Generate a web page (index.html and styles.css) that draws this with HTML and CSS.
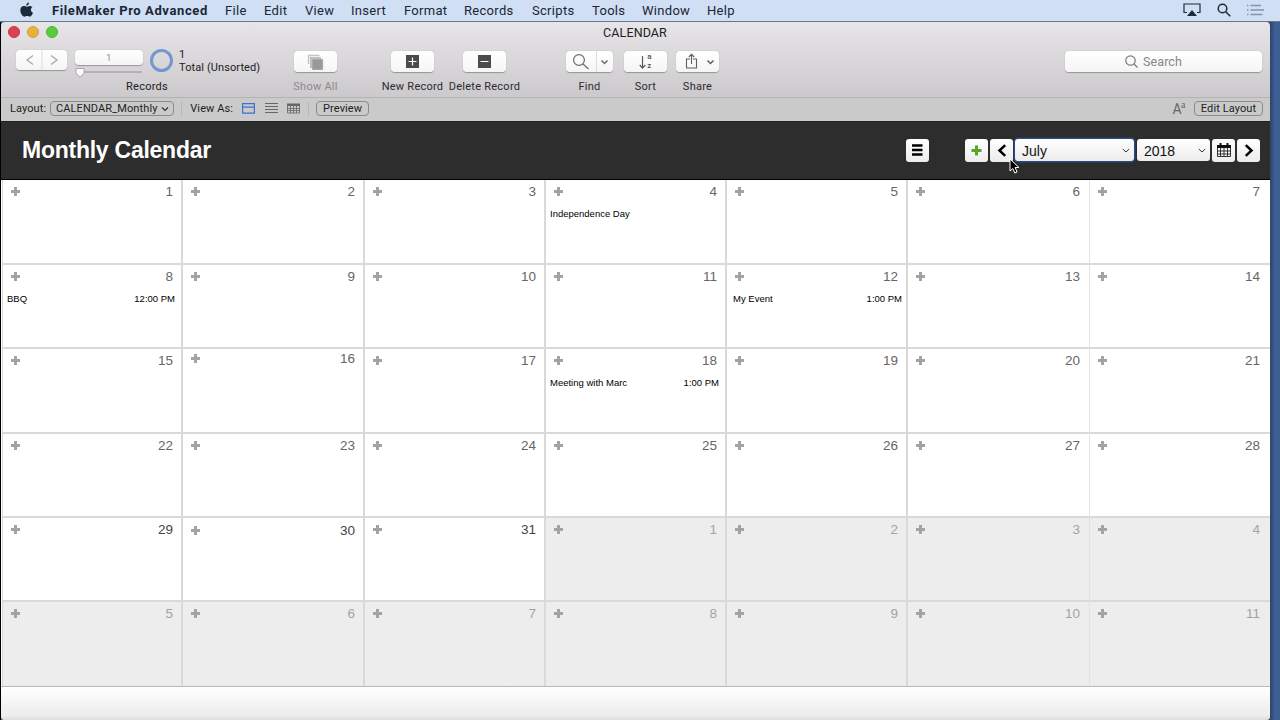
FILE: index.html
```html
<!DOCTYPE html>
<html lang="en">
<head>
    <meta charset="UTF-8">
    <title>CALENDAR</title>
    <link rel="stylesheet" href="styles.css">
</head>
<body>
    <nav class="menubar">
        <svg class="apple" width="13" height="16" viewBox="0 0 13 16"><path d="M9 .6c.1 1.700-1.200 3.100-2.700 3.200C6.100 2.300 7.500.8 9 .6zM6.700 4.700c.7 0 1.600-.8 3-.8 1.200 0 2.100.6 2.700 1.400-2.200 1.400-1.900 4.500.6 5.400-.5 1.500-1.800 4-3.300 4-.9 0-1.400-.6-2.600-.6s-1.700.6-2.600.6C2.500 14.700.3 11.200.3 8.300c0-2.800 1.700-4.300 3.500-4.300 1.200 0 2.200.7 2.900.7z"/></svg>
        <b>FileMaker Pro Advanced</b>
        <span>File</span>
        <span>Edit</span>
        <span>View</span>
        <span>Insert</span>
        <span>Format</span>
        <span>Records</span>
        <span>Scripts</span>
        <span>Tools</span>
        <span>Window</span>
        <span>Help</span>
        <div class="status-icons">
            <svg width="18" height="14" viewBox="0 0 18 14"><path d="M4 9.500H1V1h16v8.500h-3" fill="none" stroke="#1d2a3c" stroke-width="1.200"/><path d="M9 7l5 6H4z" fill="#1d2a3c"/></svg>
            <svg width="14" height="14" viewBox="0 0 14 14"><g fill="none" stroke="#1d2a3c" stroke-width="1.500"><circle cx="5.500" cy="5.500" r="4.300"/><path d="M8.700 8.700l4.600 4.600"/></g></svg>
            <svg width="17" height="12" viewBox="0 0 17 12"><path d="M0 1.500h1.500M3.500 1.500H14M0 6h1.500M3.500 6H17M0 10.500h1.500M3.500 10.500H15.500" stroke="#8593a9" stroke-width="1.300"/></svg>
        </div>
    </nav>

    <main class="window">
        <header class="titlebar">
            <div class="lights"><i class="red"></i><i class="yellow"></i><i class="green"></i></div>
            <h1>CALENDAR</h1>
        </header>

        <section class="toolbar">
            <div class="records">
                <div class="records-row">
                    <div class="btn nav-btns">
                        <svg width="50" height="20" viewBox="0 0 50 20"><g fill="none" stroke="#aaa" stroke-width="1.400"><path d="M16 5.500L10 10l6 4.500M34 5.500l6 4.500-6 4.500"/></g><path d="M25 0v20" stroke="#ddd"/></svg>
                    </div>
                    <div class="slider">
                        <div class="btn record-no">1</div>
                        <svg width="68" height="10" viewBox="0 0 68 10"><path d="M3 4h64" stroke="#b3b1b3" stroke-width="2"/><path d="M1 .5h8v4.500L5 9.300 1 5z" fill="#fff" stroke="#999" stroke-width=".8"/></svg>
                    </div>
                    <div class="ring"></div>
                    <div class="total">1<br>Total (Unsorted)</div>
                </div>
                <label>Records</label>
            </div>
            <div class="tool show-all">
                <div class="btn"><svg width="18" height="16" viewBox="0 0 18 16"><path d="M1.500 10V1.500h11" fill="none" stroke="#c4c4c4" stroke-width="1.500"/><path d="M3 3h11v11H3z" fill="#bbb"/><path d="M5 5h11v11H5z" fill="#999" stroke="#d6d6d6" stroke-width=".5"/></svg></div>
                <label>Show All</label>
            </div>
            <div class="tool new-record">
                <div class="btn"><svg width="13" height="13" viewBox="0 0 13 13"><path d="M0 0h13v13H0z" fill="#4b4b4b"/><path d="M2.500 6.500h8M6.500 2.500v8" stroke="#fff" stroke-width="1.200"/></svg></div>
                <label>New Record</label>
            </div>
            <div class="tool delete-record">
                <div class="btn"><svg width="13" height="13" viewBox="0 0 13 13"><path d="M0 0h13v13H0z" fill="#4b4b4b"/><path d="M2.500 6.500h8" stroke="#fff" stroke-width="1.200"/></svg></div>
                <label>Delete Record</label>
            </div>
            <div class="tool find">
                <div class="btn"><svg width="47" height="21" viewBox="0 0 47 21"><g fill="none" stroke="#6a6a6a" stroke-width="1.200"><circle cx="13" cy="9" r="5.400"/><path d="M17 13l5.500 5"/><path d="M35.500 9.500l3 3 3-3" stroke-width="1.500"/></g><path d="M30.500 0v21" stroke="#ddd"/></svg></div>
                <label>Find</label>
            </div>
            <div class="tool sort">
                <div class="btn">
                    <svg width="7" height="14" viewBox="0 0 7 14"><path d="M3.500 1v12M.7 10l2.800 3 2.800-3" fill="none" stroke="#5a5a5a" stroke-width="1.200"/></svg>
                    <div class="az"><span>a</span><span>z</span></div>
                </div>
                <label>Sort</label>
            </div>
            <div class="tool share">
                <div class="btn"><svg width="43" height="21" viewBox="0 0 43 21"><g fill="none" stroke="#5f5f5f" stroke-width="1.100"><path d="M14 8h-3.500v9h10V8H17M15.500 13V3.500M12.800 6l2.700-2.700L18.200 6"/><path d="M31.500 9.500l3 3 3-3" stroke-width="1.500"/></g></svg></div>
                <label>Share</label>
            </div>
            <div class="btn search">
                <svg width="13" height="13" viewBox="0 0 13 13"><g fill="none" stroke="#7a7a7a" stroke-width="1.200"><circle cx="5.500" cy="5.500" r="4.700"/><path d="M9 9l3.500 3.500"/></g></svg>
                Search
            </div>
        </section>

        <section class="layoutbar">
            <span>Layout:</span>
            <div class="pill layout-name">CALENDAR_Monthly <svg width="8" height="6" viewBox="0 0 8 6"><path d="M1 1.500l3 3 3-3" fill="none" stroke="#333" stroke-width="1.200"/></svg></div>
            <i class="sep"></i>
            <span class="view-as">View As:</span>
            <div class="views">
                <svg width="13" height="11" viewBox="0 0 13 11"><path d="M.6.6h11.800v9.500H.6zM.6 4.200h11.800" fill="none" stroke="#3a73cf" stroke-width="1.200"/></svg>
                <svg width="13" height="11" viewBox="0 0 13 11"><path d="M0 .5h13M0 3.500h13M0 6.500h13M0 9.500h13" stroke="#666"/></svg>
                <svg width="13" height="11" viewBox="0 0 13 11"><path d="M0 .5h13v2.500H0z" fill="#666"/><path d="M.5 1v9h12V1M0 5.500h13M0 7.500h13M3.500 3v7M6.500 3v7M9.500 3v7" fill="none" stroke="#666" stroke-width=".8"/></svg>
            </div>
            <i class="sep"></i>
            <div class="pill preview">Preview</div>
            <span class="aa">A<sup>a</sup></span>
            <div class="pill edit">Edit Layout</div>
        </section>

        <section class="cal-header">
            <h2>Monthly Calendar</h2>
            <div class="key menu-key"><svg width="11" height="12" viewBox="0 0 11 12"><path d="M0 1.500h10.500M0 6h10.500M0 10.500h10.500" stroke="#000" stroke-width="2.500"/></svg></div>
            <div class="key"><svg width="11" height="11" viewBox="0 0 11 11"><path d="M.5 5.500h10M5.500.5v10" stroke="#57a52b" stroke-width="3"/></svg></div>
            <div class="key"><svg width="10" height="13" viewBox="0 0 10 13"><path d="M8.200 1.200L2.500 6.500l5.700 5.300" fill="none" stroke="#000" stroke-width="2.500"/></svg></div>
            <div class="select month">July <svg width="8" height="6" viewBox="0 0 8 6"><path d="M.8 1l3.200 3L7.200 1" fill="none" stroke="#333"/></svg></div>
            <div class="select year">2018 <svg width="8" height="6" viewBox="0 0 8 6"><path d="M.8 1l3.200 3L7.200 1" fill="none" stroke="#333"/></svg></div>
            <div class="key"><svg width="14" height="14" viewBox="0 0 14 14"><path d="M0 2h14v3H0z" fill="#111"/><path d="M3.500 0v3M10.500 0v3" stroke="#111" stroke-width="2"/><path d="M.5 5v8.500h13V5M3.500 5v9M7 5v9M10.500 5v9M0 8h14M0 11h14" fill="none" stroke="#222" stroke-width=".9"/></svg></div>
            <div class="key"><svg width="10" height="13" viewBox="0 0 10 13"><path d="M1.800 1.200l5.700 5.300-5.700 5.300" fill="none" stroke="#000" stroke-width="2.500"/></svg></div>
            <svg class="cursor" width="12" height="18" viewBox="0 0 12 18"><path d="M1 1v12l2.800-2.500 2 4.500 2.300-1-2-4.500h3.800z" fill="#000" stroke="#fff"/></svg>
        </section>

        <section class="grid" id="grid"></section>
        <footer></footer>
    </main>

    <script>
        const events = {
            4: ['Independence Day', ''],
            8: ['BBQ', '12:00 PM'],
            12: ['My Event', '1:00 PM'],
            18: ['Meeting with Marc', '1:00 PM']
        };
        const grid = document.getElementById('grid');

        for (let i = 1; i <= 42; i++) {
            const other = i > 31;
            const cell = document.createElement('div');
            cell.className = 'day' + (other ? ' other' : '') + (i === 16 ? ' raised' : '') + (i === 30 ? ' lowered' : '');
            let html = '<div class="day-top"><i class="plus"></i><span>' + (other ? i - 31 : i) + '</span></div>';
            if (events[i]) {
                html += '<div class="event"><span>' + events[i][0] + '</span><span>' + events[i][1] + '</span></div>';
            }
            cell.innerHTML = html;
            grid.appendChild(cell);
        }
    </script>
</body>
</html>
```
FILE: styles.css
```css
* {
    box-sizing: border-box;
}
body {
    margin: 0;
    width: 1280px;
    height: 720px;
    overflow: hidden;
    background: linear-gradient(90deg, #000 1px, #3d5e93 1px, #3d5e93 1268px, #2c4568 1270px, #3e5f94 1275px);
    font-family: Roboto, "Liberation Sans", sans-serif;
    color: #222;
}
svg {
    display: block;
    flex: none;
}
i {
    display: block;
}

/* menu bar */
.menubar {
    display: grid;
    grid-template-columns: 32px 173px 39px 41px 46px 53px 60px 68px 60px 50px 65px 1fr 97px;
    align-items: center;
    height: 22px;
    padding: 0 0 1px 20px;
    background: #d0dff3;
    border-bottom: 1px solid #66788f;
    font-size: 13px;
    letter-spacing: 0.3px;
    color: #1a2636;
    white-space: nowrap;
}
.menubar b {
    font-weight: 700;
    letter-spacing: 0.6px;
}
.apple {
    fill: #1d2a3c;
}
.status-icons {
    display: flex;
    align-items: center;
    gap: 16px;
}

/* window */
.window {
    display: flex;
    flex-direction: column;
    width: 1269px;
    height: 698px;
    margin-left: 1px;
    border-radius: 4px;
    overflow: hidden;
    background: linear-gradient(#e7e5e7, #cbc9cb 76px);
}
.titlebar {
    display: grid;
    grid-template-columns: 100px 1fr 100px;
    align-items: center;
    height: 20px;
    padding-left: 7px;
}
.titlebar h1 {
    margin: 0;
    padding-right: 8px;
    text-align: center;
    font-size: 12.5px;
    font-weight: 400;
    letter-spacing: 0.1px;
}
.lights {
    display: flex;
    gap: 7px;
}
.lights i {
    width: 12px;
    height: 12px;
    border-radius: 50%;
    border: 1px solid #c43742;
    background: #dc4350;
}
.lights .yellow {
    border-color: #d39e35;
    background: #e7b140;
}
.lights .green {
    border-color: #45b52f;
    background: #5bcb42;
}

/* toolbar */
.toolbar {
    display: flex;
    align-items: flex-start;
    height: 55px;
    padding: 9px 8px 0 15px;
    font-size: 11px;
    letter-spacing: 0.25px;
}
.btn {
    display: flex;
    align-items: center;
    justify-content: center;
    background: linear-gradient(#fff, #f5f5f5);
    border-radius: 4px;
    box-shadow: 0 0.5px 1px rgba(0, 0, 0, 0.3);
}
.toolbar label {
    height: 14px;
    line-height: 14px;
    white-space: nowrap;
}
.records {
    width: 262px;
}
.records-row {
    display: flex;
    height: 30px;
    margin-top: -1px;
}
.nav-btns {
    width: 51px;
    height: 20px;
}
.slider {
    width: 68px;
    margin-left: 8px;
}
.record-no {
    height: 15px;
    margin-bottom: 3px;
    font-size: 9px;
    color: #888;
}
.ring {
    width: 23px;
    height: 23px;
    margin: -1px 0 0 7px;
    border: 3px solid #7398cf;
    border-radius: 50%;
}
.total {
    margin: -2px 0 0 6px;
    line-height: 13px;
    letter-spacing: 0.1px;
    white-space: nowrap;
}
.records label {
    display: block;
    width: 262px;
    text-align: center;
}
.tool {
    display: flex;
    flex-direction: column;
    align-items: center;
    width: 43px;
    color: #2c2c2c;
}
.tool .btn {
    width: 43px;
    height: 21px;
    margin-bottom: 8px;
}
.show-all {
    margin-left: 16px;
    color: #8b898b;
}
.new-record {
    margin-left: 54px;
}
.delete-record {
    margin-left: 29px;
}
.find {
    width: 47px;
    margin-left: 60px;
}
.find .btn {
    width: 47px;
}
.sort {
    margin-left: 11px;
}
.sort .btn {
    gap: 1px;
}
.share {
    margin-left: 9px;
}
.az {
    display: flex;
    flex-direction: column;
    margin-top: -2px;
    font-size: 8px;
    font-weight: 500;
    line-height: 9px;
    color: #555;
}
.search {
    gap: 5px;
    width: 197px;
    height: 21px;
    margin-left: auto;
    padding-right: 20px;
    font-size: 12.5px;
    letter-spacing: 0.1px;
    color: #868686;
}

/* layout bar */
.layoutbar {
    display: flex;
    align-items: center;
    height: 24px;
    padding: 0 7px 2px 9px;
    background: #cacaca;
    border-top: 1px solid #b3b3b3;
    font-size: 11px;
    letter-spacing: 0.1px;
    white-space: nowrap;
}
.pill {
    display: flex;
    align-items: center;
    justify-content: center;
    height: 15px;
    border: 1px solid #8b8b8b;
    border-radius: 4px;
}
.layout-name {
    gap: 3px;
    width: 124px;
    margin: 0 7px 0 4px;
}
.sep {
    width: 1px;
    height: 14px;
    background: #b7b7b7;
}
.view-as {
    margin: 0 9px 0 8px;
}
.views {
    display: flex;
    gap: 9.5px;
    margin-right: 9px;
}
.preview {
    width: 53px;
    margin-left: 7px;
}
.layoutbar .sep ~ .sep {
    margin-left: -1px;
}
.aa {
    margin-left: auto;
    font-size: 14px;
    letter-spacing: -0.5px;
    color: #666;
}
.aa sup {
    font-family: "Liberation Serif", serif;
    font-size: 10px;
    line-height: 0;
}
.edit {
    width: 69px;
    margin-left: 9px;
}

/* calendar header */
.cal-header {
    position: relative;
    display: flex;
    align-items: center;
    gap: 2px;
    height: 59px;
    padding: 0 10px 1px 21px;
    background: #2d2d2d;
    border-top: 1px solid #222;
    border-bottom: 1px solid #000;
    font-family: "Liberation Sans", Arial, sans-serif;
}
.cal-header h2 {
    margin: 0 auto 0 0;
    font-size: 23px;
    letter-spacing: -0.25px;
    color: #fff;
}
.key {
    display: flex;
    align-items: center;
    justify-content: center;
    width: 23px;
    height: 23px;
    border-radius: 3px;
    background: linear-gradient(#fff, #ececec);
}
.menu-key {
    margin-right: 34px;
}
.select {
    display: flex;
    align-items: center;
    justify-content: space-between;
    width: 73px;
    height: 22px;
    padding: 1px 4px 0 7px;
    border-radius: 3px;
    background: linear-gradient(#fff, #ececec);
    font-size: 14px;
    color: #111;
}
.month {
    width: 119px;
    margin: 0 1px 0 0;
    box-shadow: 0 0 0 1.5px #294a7c;
}
.cursor {
    position: absolute;
    left: 1008px;
    top: 36px;
}

/* days */
.grid {
    display: grid;
    grid-template-columns: 181px 182px 181px 181px 181px 182px 181px;
    grid-template-rows: 85px 84px 85px 84px 84px 84px;
    height: 506px;
    padding-left: 1px;
    background: #fff;
    font-family: "Liberation Sans", Arial, sans-serif;
}
.day {
    background: #fff;
    border-right: 2px solid #d9d9d9;
    border-bottom: 2px solid #d9d9d9;
}
.day:nth-child(7n) {
    border-right: 0;
}
.day:nth-child(7n+6) {
    border-right: 1px solid #e2e2e2;
}
.day:nth-child(n+36) {
    border-bottom: 0;
}
.day:nth-child(7n+1) {
    border-left: 1px solid #d9d9d9;
}
.day-top {
    display: flex;
    align-items: center;
    justify-content: space-between;
    height: 22px;
    padding: 0 8px;
    font-size: 13.5px;
    color: #666;
}
.day:nth-child(7n) .day-top {
    padding-right: 11px;
}
.day:nth-child(7n+6) .day-top {
    padding-right: 9px;
}
.day:nth-child(n+29) .day-top {
    height: 23px;
    color: #444;
}
.other, .day.other {
    background: #ededed;
}
.day.other .day-top {
    color: #a3a3a3;
}
.raised .day-top {
    height: 19px;
}
.day.lowered .day-top {
    height: 25px;
}
.plus {
    width: 9px;
    height: 9px;
    background: linear-gradient(#a3a3a3, #a3a3a3) center / 9px 3px no-repeat, linear-gradient(#a3a3a3, #a3a3a3) center / 3px 9px no-repeat;
}
.event {
    display: flex;
    justify-content: space-between;
    padding: 6px 6px 0 4px;
    font-size: 9.5px;
    line-height: 11px;
    color: #000;
}
.day:nth-child(12) .event {
    padding: 6px 4px 0 6px;
}

footer {
    flex: 1;
    border-top: 1px solid #b9b9b9;
    background: linear-gradient(#fff, #ececec 29px, #dcdcdc);
}
```
